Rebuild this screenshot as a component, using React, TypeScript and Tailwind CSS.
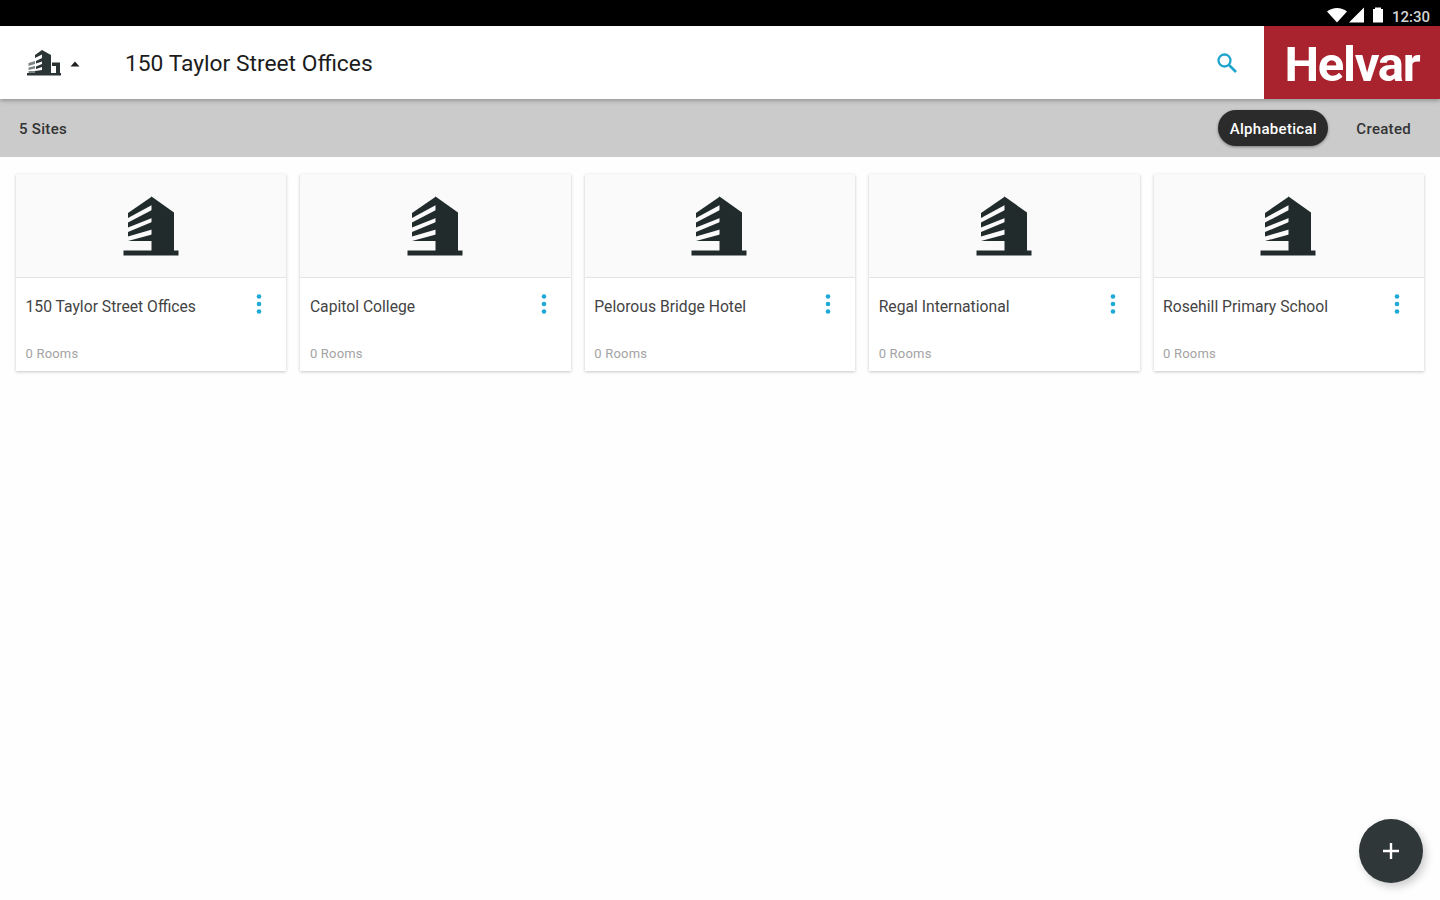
import React from "react"

const sites = [
  "150 Taylor Street Offices",
  "Capitol College",
  "Pelorous Bridge Hotel",
  "Regal International",
  "Rosehill Primary School",
]

const BuildingIcon = () => (
  <svg width="56" height="60" viewBox="0 0 56 60" fill="#222b2b">
    <path d="M28.5 0.5 51 16.5V55H28.5z" />
    <path d="M5 17 29 0.5V9L5 22z" />
    <path d="M5 26.5 29 14V22L5 31.5z" />
    <path d="M5 36 29 26V33.5L5 40.5z" />
    <path d="M5 45 29 38.5V45H5z" />
    <path d="M0.5 54.5H55.5V59.5H0.5z" />
  </svg>
)

const SitesIcon = () => (
  <svg width="36" height="28" viewBox="0 0 36 28">
    <g fill="#2c3535">
      <path d="M16 1 25 6V26H16z" />
      <path d="M9 6 16 1V5.500L9 9z" />
      <path d="M10 12 16 9V12.500L10 14.500z" />
      <path d="M10 17.500 16 15V18L10 20z" />
      <path d="M9 22 16 21V24H9z" />
      <path d="M1 24H35V26.500H1z" />
      <path d="M26 13.500H34V25H30V17H26z" />
    </g>
    <g fill="#7d8484">
      <path d="M2.500 14 9 12V15L2.500 17z" />
      <path d="M2.500 18.500 9 17V19.500L2.500 21z" />
      <path d="M2.500 22H9V24H2.500z" />
    </g>
  </svg>
)

const StatusBar = () => (
  <div className="flex h-[26px] items-center justify-end bg-black pr-2 text-white">
    <svg width="56" height="18" viewBox="0 0 56 18" fill="#fff" className="mt-[5px]">
      <path d="M0 4.500C5.500-.2 14.500-.2 20 4.500L10 15.500z" />
      <path d="M37 0.500V15.500H22z" />
      <path d="M46 2H48V0.500H54V2H56V15.500H46z" />
    </svg>
    <span className="mt-[8px] ml-[9px] w-10 text-[15px] leading-4 font-medium whitespace-nowrap text-[#d4d4d4]">
      12:30
    </span>
  </div>
)

const Header = () => (
  <header className="relative z-10 flex h-[73px] items-center bg-white shadow-[0_2px_4px_rgba(0,0,0,0.25)]">
    <div className="ml-[26px] flex items-center">
      <SitesIcon />
      <svg width="12" height="6" viewBox="0 0 12 6" className="mt-0.5 ml-[7px]">
        <path d="M6 0.500 10.500 5.500H1.500z" fill="#222" />
      </svg>
    </div>
    <h1 className="mt-1 ml-11 text-[22.8px] whitespace-nowrap text-[#1c1c1c]">150 Taylor Street Offices</h1>
    <svg width="22" height="22" viewBox="0 0 22 22" className="mr-[26px] ml-auto" fill="none" stroke="#1fa5cc">
      <circle cx="8.500" cy="8.500" r="6" strokeWidth="2.300" />
      <path d="M13 13 20 20" strokeWidth="2.600" />
    </svg>
    <div className="flex h-full w-[176px] items-center justify-center bg-[#a9232f]">
      <span className="mt-1 text-[49px] leading-none font-bold tracking-[-1.3px] text-white">Helvar</span>
    </div>
  </header>
)

const SortBar = () => (
  <div className="flex h-[58px] items-center bg-[#cbcbcb] pr-[29px] pl-[19px] text-[15px] font-medium tracking-[0.3px] text-[#333]">
    <span className="mt-[3px]">5 Sites</span>
    <button className="ml-auto h-9 w-[110px] rounded-full bg-[#2b2b2b] pt-[2px] text-white shadow-[0_1px_3px_rgba(0,0,0,0.4)]">
      Alphabetical
    </button>
    <button className="mt-[3px] ml-[28px]">Created</button>
  </div>
)

const SiteCard = ({ name }: { name: string }) => (
  <div className="h-[197px] bg-white shadow-[0_1px_3px_rgba(0,0,0,0.22)]">
    <div className="flex h-[104px] justify-center border-b border-[#e4e4e4] bg-[#fafafa] pt-[22px] pr-px">
      <BuildingIcon />
    </div>
    <div className="flex justify-between pt-4 pr-[24px] pl-[9.5px]">
      <div className="pt-px text-[15.7px] leading-6 whitespace-nowrap text-[#444]">{name}</div>
      <svg width="6" height="20" viewBox="0 0 6 20" fill="#1fa9d6">
        <circle cx="3" cy="2.500" r="2.300" />
        <circle cx="3" cy="10" r="2.300" />
        <circle cx="3" cy="17.500" r="2.300" />
      </svg>
    </div>
    <div className="mt-[26px] pl-[9.5px] text-[13px] leading-[18px] tracking-[0.2px] text-[#a3a3a3]">0 Rooms</div>
  </div>
)

const App = () => {
  return (
    <div className="flex h-screen flex-col overflow-hidden bg-[#fefefe] font-[Roboto,sans-serif]">
      <StatusBar />
      <Header />
      <SortBar />
      <main className="grid grid-cols-5 gap-[14px] pt-[17px] pr-4 pl-4">
        {sites.map((name) => (
          <SiteCard key={name} name={name} />
        ))}
      </main>
      <button className="fixed right-[17px] bottom-[17px] flex size-16 items-center justify-center rounded-full bg-[#2f3739] shadow-[3px_4px_8px_rgba(0,0,0,0.2)]">
        <svg width="18" height="18" viewBox="0 0 18 18" stroke="#fff" strokeWidth="2.400">
          <path d="M9 1V17M1 9H17" />
        </svg>
      </button>
    </div>
  )
}

export default App
